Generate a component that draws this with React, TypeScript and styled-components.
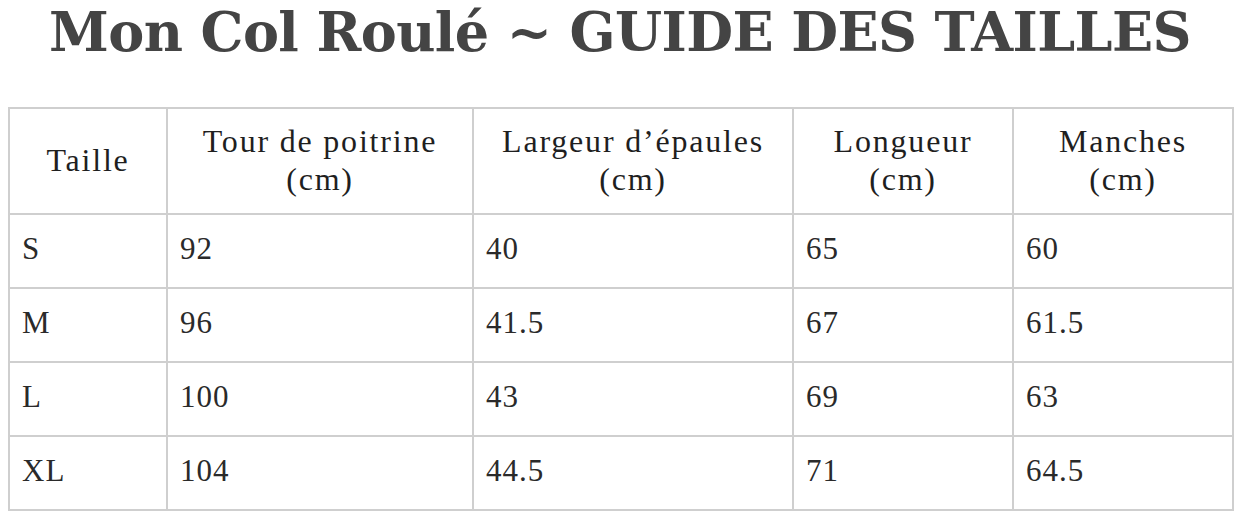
import React from "react";
import styled, { createGlobalStyle } from "styled-components";

const Global = createGlobalStyle`
  html, body { margin: 0; padding: 0; background: #fff; }
  body { font-family: "Liberation Serif", serif; }
`;

const Page = styled.div`
  padding: 0 9px 0 8px;
`;

const Title = styled.h1`
  margin: 0;
  height: 107px;
  box-sizing: border-box;
  text-align: center;
  font-family: "DejaVu Serif", serif;
  font-weight: 700;
  font-size: 54px;
  line-height: 64px;
  color: #444;
  letter-spacing: -0.6px;
`;

const Table = styled.table`
  width: 100%;
  border-collapse: collapse;
  table-layout: fixed;
  font-family: "Liberation Serif", serif;
  color: #222;
`;

const Th = styled.th`
  border: 2px solid #cfcfcf;
  height: 98px;
  font-weight: 400;
  font-size: 32px;
  letter-spacing: 1.8px;
  line-height: 38px;
  text-align: center;
  vertical-align: middle;
  padding: 2px 6px 4px;
  color: #1f1f1f;
`;

const Td = styled.td`
  border: 2px solid #cfcfcf;
  height: 68px;
  font-size: 31px;
  letter-spacing: 1px;
  line-height: 38px;
  padding: 0 12px 4px;
  text-align: left;
  vertical-align: middle;
  color: #2a2a2a;
`;

const cols = [158, 306, 320, 220, 220];

const headers = [
  ["Taille"],
  ["Tour de poitrine", "(cm)"],
  ["Largeur d’épaules", "(cm)"],
  ["Longueur", "(cm)"],
  ["Manches", "(cm)"],
];

const rows = [
  ["S", "92", "40", "65", "60"],
  ["M", "96", "41.5", "67", "61.5"],
  ["L", "100", "43", "69", "63"],
  ["XL", "104", "44.5", "71", "64.5"],
];

export default function App() {
  return (
    <Page>
      <Global />
      <Title>Mon Col Roulé ~ GUIDE DES TAILLES</Title>
      <Table>
        <colgroup>
          {cols.map((w, i) => (
            <col key={i} style={{ width: w }} />
          ))}
        </colgroup>
        <thead>
          <tr>
            {headers.map((h, i) => (
              <Th key={i}>
                {h.map((l, j) => (
                  <React.Fragment key={j}>
                    {j > 0 && <br />}
                    {l}
                  </React.Fragment>
                ))}
              </Th>
            ))}
          </tr>
        </thead>
        <tbody>
          {rows.map((r, i) => (
            <tr key={i}>
              {r.map((c, j) => (
                <Td key={j}>{c}</Td>
              ))}
            </tr>
          ))}
        </tbody>
      </Table>
    </Page>
  );
}
